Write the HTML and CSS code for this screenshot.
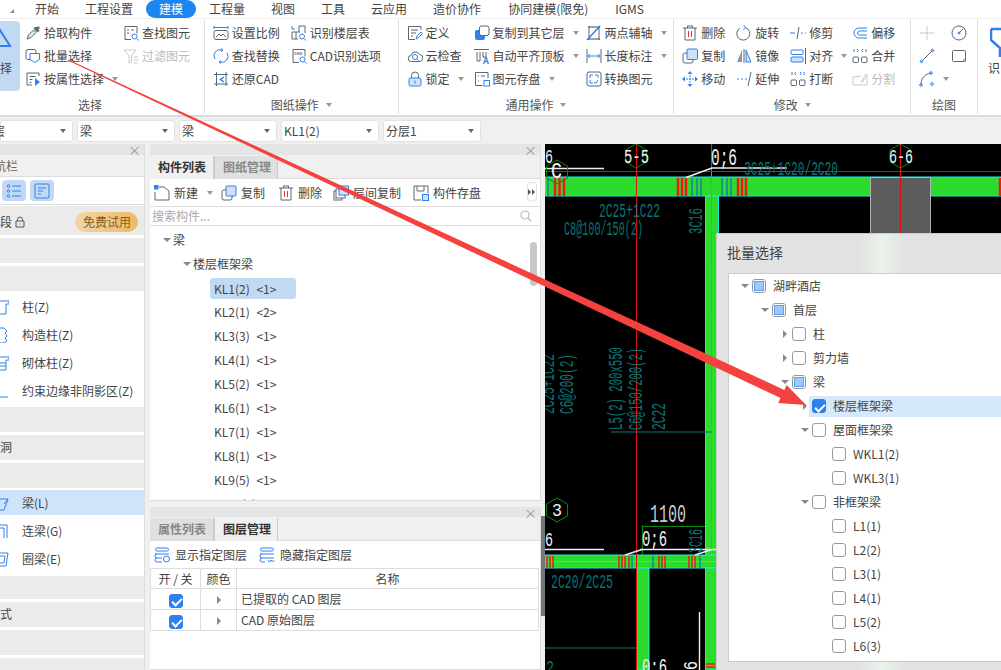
FILE: index.html
```html
<!DOCTYPE html>
<html lang="zh-CN">
<head>
  <meta charset="UTF-8" />
  <title>批量选择</title>
  <link rel="stylesheet" href="styles.css">
</head>
<body>

  <nav class="tabs">
    <span class="tabs-corner"></span>
    <a>开始</a><a>工程设置</a><a class="active">建模</a><a>工程量</a><a>视图</a><a>工具</a><a>云应用</a><a>造价协作</a><a class="wide">协同建模(限免)</a><a>IGMS</a>
  </nav>

  <div class="ribbon">
    <section class="group g-select">
      <div class="group-body">
        <div class="big-btn">
          <svg class="big-ic" viewBox="0 0 12 20"><path d="M0 2 L10 18 H-6 Z" fill="none" stroke="#2f80ed" stroke-width="2"/></svg>
          <span>择</span>
        </div>
        <div class="col w98">
          <div class="tool"><svg class="ic" viewBox="0 0 16 16"><path d="M2 14l1.500-4 5-5 2.500 2.500-5 5z" fill="#dfe6ee"/><path d="M9 3.500l1.500-1.500 1 1L13 1.500 14.500 3 13 4.500l1 1-1.500 1.500z" fill="#5b6670"/></svg>拾取构件</div>
          <div class="tool"><svg class="ic" viewBox="0 0 16 16"><rect x="1" y="1.500" width="10" height="10" rx="2"/><path class="b" d="M5 5.500h9.500v6l-4.700 3-4.800-3z" fill="#fff"/></svg>批量选择</div>
          <div class="tool"><svg class="ic" viewBox="0 0 16 16"><path d="M14 5V2H2v12h5M4.500 5.500h6M4.500 8.500h3M4.500 11.500h2"/><path d="M10 7l5 4-5 4z" fill="#2f80ed" stroke="none"/></svg>按属性选择<i class="caret"></i></div>
        </div>
        <div class="col">
          <div class="tool"><svg class="ic" viewBox="0 0 16 16"><path d="M8 14.500H2v-13h12v7M4 5h2M8 5h3M4 8h2"/><circle class="b" cx="11.500" cy="11.500" r="2.500"/><path class="b" d="M13.500 13.500l2 2"/></svg>查找图元</div>
          <div class="tool off"><svg class="ic" viewBox="0 0 16 16"><path class="g" d="M1 2h12L8.500 8v6L6 15V8zM10.500 9H15M10.500 12H15M10.500 15H15"/></svg>过滤图元</div>
        </div>
      </div>
      <div class="group-label">选择</div>
    </section>

    <section class="group g-cad">
      <div class="group-body">
        <div class="col w78">
          <div class="tool"><svg class="ic" viewBox="0 0 16 16"><path class="b" d="M1 1v3M15 1v3M1 2.500h14"/><rect x="1" y="5.500" width="14" height="9" rx="2"/><path d="M3 12l3-3 2 2 2-2 3 3"/></svg>设置比例</div>
          <div class="tool"><svg class="ic" viewBox="0 0 16 16"><path class="b" d="M2 11A6 6 0 0 1 9 2M14 5a6 6 0 0 1-7 9"/><path class="b" d="M8 .5L10 2 8 4M8 12.500L6 14l2 1.500"/></svg>查找替换</div>
          <div class="tool"><svg class="ic" viewBox="0 0 16 16"><path d="M1 3.500h14M3.500 1v14M1 13h14M13 1v14"/><path class="b" d="M11 6L7.500 8.500 11 11" stroke-width="1.500"/></svg>还原CAD</div>
        </div>
        <div class="col">
          <div class="tool"><svg class="ic" viewBox="0 0 16 16"><path class="b" d="M1 1v3h3"/><path d="M8 1h6v7M1 7h8M1 7v7h6M5 7v7M8 1v6"/><circle class="b" cx="11" cy="11.500" r="2.500"/><path class="b" d="M13 13.500l2 2"/></svg>识别楼层表</div>
          <div class="tool"><svg class="ic" viewBox="0 0 16 16"><path d="M8 14.500H2v-13h12v7"/><text class="ic-txt" x="3" y="7">CAD</text><circle class="b" cx="11.500" cy="11.500" r="2.500"/><path class="b" d="M13.500 13.500l2 2"/></svg>CAD识别选项</div>
        </div>
      </div>
      <div class="group-label">图纸操作<i class="caret"></i></div>
    </section>

    <section class="group g-common">
      <div class="group-body">
        <div class="col w67">
          <div class="tool"><svg class="ic" viewBox="0 0 16 16"><path d="M14 5V1.500H1.500v13H8M4 5h7M4 8h5M4 11h2"/><path class="b" d="M9 14l1-3 4-4 1.500 1.500-4 4z"/></svg>定义</div>
          <div class="tool"><svg class="ic" viewBox="0 0 16 16"><path d="M4.500 13.500A3 3 0 0 1 4 7.500 4.500 4.500 0 0 1 12.500 6.500 3.500 3.500 0 0 1 12 13.500z"/><circle class="b" cx="8" cy="9" r="2.500"/><path class="b" d="M10 11l1.500 1.500"/></svg>云检查</div>
          <div class="tool"><svg class="ic" viewBox="0 0 16 16"><path d="M4.500 7V4.500a3.500 3.500 0 0 1 7 0V7"/><rect class="b" x="2" y="7" width="12" height="8" rx="1.500" fill="#cfe2fa"/><path class="b" d="M8 9.500v3"/></svg>锁定<i class="caret"></i></div>
        </div>
        <div class="col w112">
          <div class="tool"><svg class="ic" viewBox="0 0 16 16"><rect x="1" y="5" width="10" height="10" rx="2" fill="#2f80ed" stroke="none"/><rect x="5.500" y="1" width="9.500" height="9.500" rx="2" fill="#fff"/></svg>复制到其它层<i class="caret"></i></div>
          <div class="tool"><svg class="ic" viewBox="0 0 16 16"><path d="M0 1.500h15M3 4v9h3V4M9 4v5h3V4"/><text class="ic-a" x="9" y="16">A</text></svg>自动平齐顶板<i class="caret"></i></div>
          <div class="tool"><svg class="ic" viewBox="0 0 16 16"><path d="M14 7V1.500H1.500v13h7M4 5h1M7 5h4M4 10h1"/><rect class="b" x="10" y="9.500" width="5.500" height="5.500"/></svg>图元存盘<i class="caret"></i></div>
        </div>
        <div class="col">
          <div class="tool"><svg class="ic" viewBox="0 0 16 16"><path d="M2 2h12M2 14h12" stroke="#9aa3ac" stroke-width="2"/><path d="M3 1v14M13 1v14"/><path class="b" d="M1 15L14 1" stroke-width="1.500"/></svg>两点辅轴<i class="caret"></i></div>
          <div class="tool"><svg class="ic" viewBox="0 0 16 16"><path d="M1 1v14M15 1v14"/><path class="b" d="M2 8h12M4 6L2 8l2 2M12 6l2 2-2 2"/></svg>长度标注<i class="caret"></i></div>
          <div class="tool"><svg class="ic" viewBox="0 0 16 16"><rect x="1" y="1" width="14" height="14" rx="2"/><path class="b" d="M4 7V4h3M12 7V4H9M4 9v3h3M12 9l-2 3H8"/></svg>转换图元</div>
        </div>
      </div>
      <div class="group-label">通用操作<i class="caret"></i></div>
    </section>

    <section class="group g-edit">
      <div class="group-body">
        <div class="col w54">
          <div class="tool"><svg class="ic" viewBox="0 0 16 16"><path d="M1 3h14M5.500 3V1h5v2M3 3v12h10V3"/><path d="M6.500 6v6M9.500 6v6" stroke="#e33"/></svg>删除</div>
          <div class="tool"><svg class="ic" viewBox="0 0 16 16"><rect x="1" y="5" width="10" height="10" rx="2"/><rect class="b" x="5" y="1" width="10.500" height="10.500" rx="1" fill="#cfe2fa"/></svg>复制</div>
          <div class="tool"><svg class="ic" viewBox="0 0 16 16"><path class="b" d="M8 4v8M4 8h8" stroke-dasharray="2 1"/><path d="M8 0l2.500 3h-5zM8 16l2.500-3h-5zM0 8l3-2.500v5zM16 8l-3-2.500v5z" fill="#2f80ed" stroke="none"/></svg>移动</div>
        </div>
        <div class="col w54">
          <div class="tool"><svg class="ic" viewBox="0 0 16 16"><path d="M9.500 2.500A6.500 6.500 0 1 1 4 3"/><path class="b" d="M7.500 .5l2.500 2-2.500 2"/></svg>旋转</div>
          <div class="tool"><svg class="ic" viewBox="0 0 16 16"><path d="M6 2L1 14h5z" fill="#8f98a2" stroke="none"/><path class="b" d="M10 2l5 12h-5z" fill="#cfe2fa"/><path d="M8 1v14"/></svg>镜像</div>
          <div class="tool"><svg class="ic" viewBox="0 0 16 16"><path class="b" d="M1 8h2M5 8h2M9 8h2"/><path d="M15 1l-3 14"/></svg>延伸</div>
        </div>
        <div class="col w62">
          <div class="tool"><svg class="ic" viewBox="0 0 16 16"><path class="b" d="M0 8h5M11 8h2M15 8h1"/><path d="M9 2L7 14"/></svg>修剪</div>
          <div class="tool"><svg class="ic" viewBox="0 0 16 16"><rect class="b" x="1" y="2" width="12" height="4.500" rx="1"/><rect class="b" x="1" y="9" width="12" height="5" rx="1" fill="#cfe2fa"/><path d="M15.500 0v16"/></svg>对齐<i class="caret"></i></div>
          <div class="tool"><svg class="ic" viewBox="0 0 16 16"><path class="b" d="M2 1v3M6 1L4.500 2.500 6 4M14 1v3M10 1l1.500 1.500L10 4"/><rect x="1" y="9" width="5.500" height="5.500" rx="1"/><rect x="9.500" y="9" width="5.500" height="5.500" rx="1"/></svg>打断</div>
        </div>
        <div class="col">
          <div class="tool"><svg class="ic" viewBox="0 0 16 16"><path class="b" d="M15 3H7a5 5 0 0 0 0 10h8M15 6H7.500a2 2 0 0 0 0 4H15"/></svg>偏移</div>
          <div class="tool"><svg class="ic" viewBox="0 0 16 16"><path class="b" d="M2 1v3M14 1v3M5 1L6.500 2.500 5 4M11 1L9.500 2.500 11 4"/><rect x="1" y="9" width="5.500" height="5.500" rx="1"/><rect x="9.500" y="9" width="5.500" height="5.500" rx="1"/></svg>合并</div>
          <div class="tool off"><svg class="ic" viewBox="0 0 16 16"><path class="g" d="M15 6v8H1V6l8-1M9 11l5-8 1.500 1-5 7z"/></svg>分割</div>
        </div>
      </div>
      <div class="group-label">修改<i class="caret"></i></div>
    </section>

    <section class="group g-draw">
      <div class="group-body">
        <div class="col w32">
          <div class="tool"><svg class="ic" viewBox="0 0 16 16"><path class="g" d="M8 1v5M8 10v5M1 8h5M10 8h5"/><circle cx="8" cy="8" r="1.500" fill="#ccc" stroke="none"/></svg></div>
          <div class="tool"><svg class="ic" viewBox="0 0 16 16"><path d="M2.500 13.500l11-11"/><circle class="b" cx="2.500" cy="13.500" r="1.300"/><circle class="b" cx="13.500" cy="2.500" r="1.300"/></svg></div>
          <div class="tool"><svg class="ic" viewBox="0 0 16 16"><path d="M2 14C2 7 6 3 12 2"/><circle class="b" cx="2" cy="14" r="1.300"/><circle class="b" cx="12" cy="2" r="1.300"/><circle class="b" cx="13" cy="13" r="1.300"/></svg><i class="caret"></i></div>
        </div>
        <div class="col">
          <div class="tool"><svg class="ic" viewBox="0 0 16 16"><circle cx="8" cy="8" r="7"/><path class="b" d="M8 8l4-4"/><circle class="b" cx="8" cy="8" r="1"/></svg></div>
          <div class="tool"><svg class="ic" viewBox="0 0 16 16"><rect x="1.500" y="2.500" width="13" height="11" rx="1"/><circle class="b" cx="13.500" cy="12.500" r="1"/></svg></div>
        </div>
      </div>
      <div class="group-label">绘图</div>
    </section>

    <section class="g-recog">
      <svg class="recog-ic" viewBox="0 0 11 30"><path d="M1 2h10M1 2v11l9 8v9" fill="none" stroke="#2f80ed" stroke-width="2.500"/></svg>
      <span>识</span>
    </section>
  </div>

  <div class="combos">
    <div class="combo first"><span>层</span><i class="caret"></i></div>
    <div class="combo"><span>梁</span><i class="caret"></i></div>
    <div class="combo"><span>梁</span><i class="caret"></i></div>
    <div class="combo"><span>KL1(2)</span><i class="caret"></i></div>
    <div class="combo"><span>分层1</span><i class="caret"></i></div>
  </div>

  <div class="main">
    <aside class="nav-panel">
      <div class="strip"><span class="close">×</span></div>
      <div class="nav-title">航栏</div>
      <div class="nav-btns">
        <span class="nav-btn"><svg class="ic" viewBox="0 0 16 16"><path class="b" d="M6 3h9M6 8h9M6 13h9"/><circle class="b" cx="2.500" cy="3" r="1.200"/><circle class="b" cx="2.500" cy="8" r="1.200"/><circle class="b" cx="2.500" cy="13" r="1.200"/></svg></span>
        <span class="nav-btn"><svg class="ic" viewBox="0 0 16 16"><rect class="b" x="1" y="1" width="14" height="14" rx="1"/><path class="b" d="M4 5h8M4 8h5M4 11h3"/></svg></span>
      </div>
      <div class="band trial">
        <span class="band-txt">段 <svg class="lock" viewBox="0 0 10 12"><path d="M2.500 5V3.500a2.500 2.500 0 0 1 5 0V5M1 5h8v6H1zM5 7.500v1" fill="none" stroke="#555"/></svg></span>
        <span class="trial-btn">免费试用</span>
      </div>
      <div class="band"></div>
      <div class="band"></div>
      <ul class="nav-list">
        <li><svg class="nav-ic" viewBox="0 0 9 16"><path class="b" d="M-2 2h11v3H6v10H-2"/></svg>柱(Z)</li>
        <li><svg class="nav-ic" viewBox="0 0 9 16"><path class="b" d="M-2 1h6l3 3-2 2 2 3-2 2 2 3-3 2h-6"/></svg>构造柱(Z)</li>
        <li><svg class="nav-ic" viewBox="0 0 9 16"><path class="b" d="M-2 2h11v3H6v10H-2M-2 8h8M-2 11h8"/></svg>砌体柱(Z)</li>
        <li><svg class="nav-ic" viewBox="0 0 9 16"><path d="M-2 1h7l3 3v9"/><path class="b" d="M-2 14h10"/></svg>约束边缘非阴影区(Z)</li>
      </ul>
      <div class="band after-a"></div>
      <div class="band">洞</div>
      <div class="band"></div>
      <ul class="nav-list">
        <li class="sel"><svg class="nav-ic" viewBox="0 0 9 16"><path class="b" d="M-2 4h10L4 15H-2M8 4L4 9"/></svg>梁(L)</li>
        <li><svg class="nav-ic" viewBox="0 0 9 16"><path class="b" d="M-2 2h9v13M-2 5h6v10"/></svg>连梁(G)</li>
        <li><svg class="nav-ic" viewBox="0 0 9 16"><path class="b" d="M-2 2h10L6 15H-2M-2 5h7L4 12H-2"/></svg>圈梁(E)</li>
      </ul>
      <div class="band after-b"></div>
      <div class="band">式</div>
      <div class="band"></div>
      <div class="band"></div>
    </aside>

    <div class="mid">
      <section class="panel top-panel">
        <div class="strip"><span class="close">×</span></div>
        <div class="panel-tabs"><span class="ptab on">构件列表</span><span class="ptab">图纸管理</span></div>
        <div class="bar">
          <span class="bar-item i-new"><svg class="ic" viewBox="0 0 16 16"><path d="M5 2H10L15 6V15H1V7"/><rect class="b" x="0" y="0" width="4" height="4" fill="#2f80ed"/></svg>新建<i class="caret"></i></span>
          <span class="bar-item i-copy"><svg class="ic" viewBox="0 0 16 16"><rect x="1" y="5" width="10" height="10" rx="2"/><rect class="b" x="5" y="1" width="10" height="10" rx="1" fill="#cfe2fa"/></svg>复制</span>
          <span class="bar-item i-del"><svg class="ic" viewBox="0 0 16 16"><path d="M1 3h14M5.500 3V1h5v2M3 3v12h10V3"/><path d="M6.500 6v6M9.500 6v6" stroke="#e33"/></svg>删除</span>
          <span class="bar-item i-floor"><svg class="ic" viewBox="0 0 16 16"><rect x="1" y="6" width="8" height="9"/><rect x="3" y="4" width="9" height="9" fill="#fff"/><rect class="b" x="6" y="1" width="9.500" height="9" fill="#cfe2fa"/></svg>层间复制</span>
          <span class="bar-item"><svg class="ic" viewBox="0 0 16 16"><path d="M8 15H1V1h14v7M4 1v5h7V1"/><rect class="b" x="9.500" y="9.500" width="6" height="6" fill="#cfe2fa"/></svg>构件存盘</span>
          <span class="more"><svg viewBox="0 0 8 6"><path d="M0 0l3 3-3 3zM4 0l3 3-3 3z" fill="#555"/></svg></span>
        </div>
        <div class="search"><span>搜索构件...</span><svg class="search-ic" viewBox="0 0 12 12"><circle cx="5" cy="5" r="4" fill="none" stroke="#bbb" stroke-width="1.200"/><path d="M8 8l3 3" stroke="#bbb" stroke-width="1.200"/></svg></div>
        <div class="list">
          <div class="list-head lv1"><i class="tri-d"></i>梁</div>
          <div class="list-head lv2"><i class="tri-d"></i>楼层框架梁</div>
          <div class="kl sel">KL1(2) <small>&lt;1&gt;</small></div>
          <div class="kl">KL2(1) <small>&lt;2&gt;</small></div>
          <div class="kl">KL3(3) <small>&lt;1&gt;</small></div>
          <div class="kl">KL4(1) <small>&lt;1&gt;</small></div>
          <div class="kl">KL5(2) <small>&lt;1&gt;</small></div>
          <div class="kl">KL6(1) <small>&lt;1&gt;</small></div>
          <div class="kl">KL7(1) <small>&lt;1&gt;</small></div>
          <div class="kl">KL8(1) <small>&lt;1&gt;</small></div>
          <div class="kl">KL9(5) <small>&lt;1&gt;</small></div>
          <div class="kl">KL10(1) <small>&lt;1&gt;</small></div>
          <span class="scroll-thumb"></span>
        </div>
      </section>

      <section class="panel bottom-panel">
        <div class="strip short"><span class="close">×</span></div>
        <div class="panel-tabs"><span class="ptab">属性列表</span><span class="ptab on">图层管理</span></div>
        <div class="bar layer-bar">
          <span class="bar-item"><svg class="ic" viewBox="0 0 16 16"><path class="b" d="M3 1h10a1.500 1.500 0 0 1 0 3H3A1.500 1.500 0 0 1 3 1zM1 7h14M3 7a2 2 0 0 0 0 4h5M3 11a2 2 0 0 0 0 4h5"/><circle class="b" cx="12.500" cy="12" r="3"/></svg>显示指定图层</span>
          <span class="bar-item"><svg class="ic" viewBox="0 0 16 16"><path class="b" d="M3 1h10a1.500 1.500 0 0 1 0 3H3A1.500 1.500 0 0 1 3 1zM1 7h14M3 7a2 2 0 0 0 0 4h12M3 11a2 2 0 0 0 0 4h3M9 13l1.500 2 1.500-2 1.500 2 1.500-2"/></svg>隐藏指定图层</span>
        </div>
        <table class="layers">
          <tr class="head"><th class="c1">开 / 关</th><th class="c2">颜色</th><th>名称</th></tr>
          <tr><td class="c1"><span class="cb on"></span></td><td class="c2"><i class="tri-r"></i></td><td>已提取的 CAD 图层</td></tr>
          <tr><td class="c1"><span class="cb on"></span></td><td class="c2"><i class="tri-r"></i></td><td>CAD 原始图层</td></tr>
        </table>
      </section>
    </div>

    <span class="splitter"></span>

    <div class="canvas">
      <svg class="cad" viewBox="545 144 456 526">
        <rect x="545" y="144" width="456" height="526" fill="#000"/>

        <!-- beams -->
        <rect x="545" y="177" width="456" height="19" fill="#2cdc2c" stroke="#18eaea"/>
        <rect x="705.500" y="196" width="13" height="360" fill="#2cdc2c" stroke="#18eaea"/>
        <rect x="545" y="555" width="172" height="13" fill="#2cdc2c" stroke="#18eaea"/>
        <rect x="636.500" y="568" width="12.500" height="102" fill="#2cdc2c" stroke="#18eaea"/>
        <rect x="705.500" y="568" width="13" height="102" fill="#2cdc2c" stroke="#18eaea"/>
        <path d="M545 561.500H717" stroke="#8fbf8f"/>
        <path d="M711.500 144V550" stroke="#888" stroke-dasharray="40 3"/>
        <rect x="870.500" y="177.500" width="60" height="60" fill="#5c5c5c" stroke="#b5b5b5"/>

        <!-- rebar ticks -->
        <path d="M555 178v18M559.500 178v18M564 178v18M678 178v18M682 178v18M686 178v18M738 178v18M742 178v18M746 178v18M1000 178v18" stroke="#f01818" stroke-width="2.500"/>
        <path d="M548 178v18M692 178v18M697 178v18M701 178v18M722 178v18M727 178v18M731 178v18" stroke="#1450e0"/>
        <path d="M547 556v12M550 556v12M553 556v12M619 556v12M622 556v12M625 556v12M629 556v12M659 556v12M662 556v12M665 556v12M689 556v12M692 556v12M695 556v12" stroke="#f01818" stroke-width="1.500"/>
        <path d="M632 556v12M653 556v12M700 556v12" stroke="#1450e0"/>
        <path d="M706 664h9M706 667h9" stroke="#f01818" stroke-width="1.500"/>

        <!-- axis lines -->
        <path d="M545 171.500H1001" stroke="#e01010"/>
        <path d="M636.500 144V670M900.500 144V233" stroke="#e01010"/>
        <path d="M642.500 525V555M642.500 526.500H705M711.500 144V170" stroke="#0d8a0d" stroke-width="1.200"/>
        <path d="M545 168.500H604M711 168H787M686 177.500L712 168M545 549.500H604M640 549.500H716M625 555L642 549.500M695 555L712 549.500M699.500 612V670" stroke="#eee" stroke-width="1.400"/>
        <path d="M611 432H712M545 648H636" stroke="#0a7a7a"/>

        <!-- section marks -->
        <polygon points="636,144 646.400,150 646.400,162 636,168 625.600,162 625.600,150" fill="none" stroke="#0a8a0a"/>
        <polygon points="900.500,144 910.900,150 910.900,162 900.500,168 890.100,162 890.100,150" fill="none" stroke="#0a8a0a"/>
        <polygon points="557,160 567.400,166 567.400,178 557,184 546.600,178 546.600,166" fill="none" stroke="#0a8a0a"/>
        <polygon points="557,498 567.400,504 567.400,516 557,522 546.600,516 546.600,504" fill="none" stroke="#0a8a0a"/>

        <text class="w" x="545" y="163" font-size="21" textLength="8" lengthAdjust="spacingAndGlyphs">6</text>
        <text class="w" x="624" y="163" font-size="21" textLength="25" lengthAdjust="spacingAndGlyphs">5-5</text>
        <text class="w" x="889" y="163" font-size="21" textLength="24" lengthAdjust="spacingAndGlyphs">6-6</text>
        <text class="w" x="711" y="165" font-size="23" textLength="26" lengthAdjust="spacingAndGlyphs">0;6</text>
        <text class="w" x="551" y="178" font-size="22" textLength="11" lengthAdjust="spacingAndGlyphs">C</text>
        <text class="w" x="552" y="516" font-size="19" textLength="10" lengthAdjust="spacingAndGlyphs">3</text>
        <text class="w dim" x="650" y="522" font-size="26" textLength="36" lengthAdjust="spacingAndGlyphs">1100</text>
        <text class="w" x="545" y="546" font-size="21" textLength="8" lengthAdjust="spacingAndGlyphs">6</text>
        <text class="w" x="642" y="546" font-size="22" textLength="25" lengthAdjust="spacingAndGlyphs">0;6</text>
        <text class="w" x="642" y="674" font-size="22" textLength="25" lengthAdjust="spacingAndGlyphs">0:6</text>
        <text class="w" transform="translate(697,670) rotate(-90)" font-size="21" textLength="9" lengthAdjust="spacingAndGlyphs">6</text>

        <text class="t" x="744" y="175" textLength="94" lengthAdjust="spacingAndGlyphs">3C25+1C20/2C20</text>
        <text class="t" x="599" y="217" textLength="61" lengthAdjust="spacingAndGlyphs">2C25+1C22</text>
        <text class="t" x="564" y="235" textLength="79" lengthAdjust="spacingAndGlyphs">C8@100/150(2)</text>
        <text class="t" transform="translate(702,234) rotate(-90)" textLength="26" lengthAdjust="spacingAndGlyphs">3C16</text>
        <text class="t" transform="translate(554,414) rotate(-90)" textLength="60" lengthAdjust="spacingAndGlyphs">2C25+1C22</text>
        <text class="t" transform="translate(573,414) rotate(-90)" textLength="60" lengthAdjust="spacingAndGlyphs">C6@200(2)</text>
        <text class="t" transform="translate(622,430) rotate(-90)" textLength="83" lengthAdjust="spacingAndGlyphs">L5(2) 200x550</text>
        <text class="t" transform="translate(642,430) rotate(-90)" textLength="82" lengthAdjust="spacingAndGlyphs">C6@150/200(2)</text>
        <text class="t" transform="translate(665,430) rotate(-90)" textLength="27" lengthAdjust="spacingAndGlyphs">2C22</text>
        <text class="t" transform="translate(702,553) rotate(-90)" textLength="24" lengthAdjust="spacingAndGlyphs">3C16</text>
        <text class="t" x="551" y="588" textLength="62" lengthAdjust="spacingAndGlyphs">2C20/2C25</text>
        <text class="t" x="546" y="674" textLength="8" lengthAdjust="spacingAndGlyphs">2</text>
      </svg>
    </div>
  </div>

  <div class="dialog">
    <div class="dialog-title">批量选择</div>
    <div class="dialog-tree">
      <div class="row lv0"><i class="tri-d"></i><span class="cb part"></span>湖畔酒店</div>
      <div class="row lv1"><i class="tri-d"></i><span class="cb part"></span>首层</div>
      <div class="row lv2"><i class="tri-r"></i><span class="cb"></span>柱</div>
      <div class="row lv2"><i class="tri-r"></i><span class="cb"></span>剪力墙</div>
      <div class="row lv2"><i class="tri-d"></i><span class="cb part"></span>梁</div>
      <div class="row lv3 sel"><i class="tri-r"></i><span class="cb on"></span>楼层框架梁</div>
      <div class="row lv3"><i class="tri-d"></i><span class="cb"></span>屋面框架梁</div>
      <div class="row lv4"><i></i><span class="cb"></span>WKL1(2)</div>
      <div class="row lv4"><i></i><span class="cb"></span>WKL3(1)</div>
      <div class="row lv3"><i class="tri-d"></i><span class="cb"></span>非框架梁</div>
      <div class="row lv4"><i></i><span class="cb"></span>L1(1)</div>
      <div class="row lv4"><i></i><span class="cb"></span>L2(2)</div>
      <div class="row lv4"><i></i><span class="cb"></span>L3(1)</div>
      <div class="row lv4"><i></i><span class="cb"></span>L4(1)</div>
      <div class="row lv4"><i></i><span class="cb"></span>L5(2)</div>
      <div class="row lv4"><i></i><span class="cb"></span>L6(3)</div>
    </div>
  </div>

  <svg class="arrow" viewBox="0 0 1001 670">
    <polygon points="68.200,59.550 784.300,389.900 786.600,384.900 806,405 778.200,403.100 780.500,398.100 67.800,60.450" fill="#f4423f"/>
  </svg>

</body>
</html>
```

FILE: styles.css
```css
* {
  box-sizing: border-box;
}

html, body {
  margin: 0;
  padding: 0;
}

body {
  position: relative;
  width: 1001px;
  height: 670px;
  overflow: hidden;
  background-color: #f0f0f0;
  color: #444;
  font-family: "Noto Sans CJK SC", "Noto Sans", sans-serif;
  font-size: 12px;
  line-height: 18px;
}

/* top tabs */
.tabs {
  display: flex;
  align-items: center;
  height: 19px;
  padding-left: 22px;
  background: white;
  border-bottom: 1px solid #eee;
}

.tabs a {
  padding: 0 13px;
  height: 18px;
  border-radius: 9px;
}

.tabs a.wide {
  padding: 0 14px;
}

.tabs a.active {
  background: #1a86f0;
  color: white;
}

.tabs-corner {
  position: absolute;
  left: 10px;
  top: 9px;
  border-left: 4px solid transparent;
  border-bottom: 4px solid #888;
}

/* ribbon */
.ribbon {
  display: flex;
  height: 98px;
  background: white;
  border-bottom: 2px solid #ddd;
}

.group {
  display: flex;
  flex-direction: column;
  height: 94px;
  margin-top: 1px;
  border-right: 1px solid #ddd;
}

.group-body {
  display: flex;
  flex: 1;
  padding: 1px 0 0 8px;
}

.group-label {
  display: flex;
  justify-content: center;
  align-items: center;
  height: 20px;
  padding-top: 1px;
  color: #555;
}

.group-label .caret {
  margin-left: 7px;
}

.g-select { width: 205px; }
.g-cad { width: 194px; }
.g-common { width: 276px; }
.g-edit { width: 237px; }
.g-draw { width: 67px; }

.g-select .group-body { padding-left: 0; }
.g-select .group-label { padding-right: 24px; }

.big-btn {
  display: flex;
  flex-direction: column;
  width: 20px;
  height: 70px;
  margin-right: 5px;
  padding-top: 7px;
  background: #c2d9f3;
  border-radius: 0 4px 4px 0;
}

.big-ic {
  width: 12px;
  height: 20px;
}

.big-btn span {
  margin-top: 11px;
  line-height: 18px;
}

.col { display: flex; flex-direction: column; }
.w32 { width: 32px; }
.w54 { width: 54px; }
.w62 { width: 62px; }
.w67 { width: 67px; }
.w78 { width: 78px; }
.w98 { width: 98px; }
.w112 { width: 112px; }

.tool {
  display: flex;
  align-items: center;
  gap: 3px;
  height: 23px;
  white-space: nowrap;
}

.tool.off { color: #bbb; }

.ic {
  flex: none;
  width: 16px;
  height: 16px;
  fill: none;
  stroke: #5b6670;
  stroke-width: 1;
}

.ic .b, .nav-ic .b { stroke: #2f80ed; }
.ic .g { stroke: #c8c8c8; }

.ic-txt {
  font-size: 4px;
  font-weight: bold;
  fill: #5b6670;
  stroke: none;
}

.ic-a {
  font-size: 9px;
  font-weight: bold;
  fill: #2f80ed;
  stroke: none;
}

.caret {
  display: inline-block;
  margin-left: 5px;
  border-top: 4px solid #999;
  border-left: 3.5px solid transparent;
  border-right: 3.5px solid transparent;
}

.g-recog {
  display: flex;
  flex-direction: column;
  padding: 8px 0 0 12px;
}

.recog-ic {
  width: 11px;
  height: 30px;
}

.g-recog span {
  margin-top: 2px;
  margin-left: -2px;
}

/* combo row */
.combos {
  display: flex;
  gap: 4px;
  height: 26px;
  padding-top: 3px;
}

.combo {
  display: flex;
  justify-content: space-between;
  align-items: center;
  width: 98px;
  height: 22px;
  padding: 0 6px 1px 2px;
  background: white;
  border: 1px solid #e2e2e2;
  border-radius: 3px;
}

.combo .caret {
  border-top-color: #666;
}

.combo.first {
  width: 73px;
  padding-left: 0;
}

.combo.first span {
  margin-left: -8px;
}

/* main area */
.main {
  display: flex;
  height: 527px;
  padding-top: 1px;
}

.strip {
  display: flex;
  justify-content: flex-end;
  align-items: center;
  height: 11px;
  padding-right: 3px;
  background: #e5e5e5;
}

.strip.short {
  height: 10px;
}

.close {
  color: #999;
  font-size: 13px;
  line-height: 11px;
}

/* left nav */
.nav-panel {
  flex: none;
  width: 145px;
  background: white;
  border-right: 1px solid #ddd;
  overflow: hidden;
}

.nav-title {
  height: 22px;
  margin-left: -2px;
  padding-top: 2px;
  background: #f0f0f0;
  border-bottom: 1px solid #ddd;
  color: #666;
  text-indent: -4px;
}

.nav-btns {
  display: flex;
  gap: 4px;
  height: 28px;
  padding: 3px 0 0 2px;
  border-bottom: 1px solid #ddd;
}

.nav-btn {
  display: flex;
  justify-content: center;
  align-items: center;
  width: 24px;
  height: 21px;
  background: #c2d9f3;
  border-radius: 4px;
}

.band {
  height: 25px;
  margin-bottom: 3px;
  padding-top: 3px;
  background: #ebebeb;
  overflow: hidden;
}

.trial {
  display: flex;
  justify-content: space-between;
  align-items: center;
  height: 29px;
  margin-top: 1px;
  padding: 3px 6px 0 0;
}

.band-txt {
  display: flex;
  align-items: center;
  gap: 3px;
}

.lock {
  width: 10px;
  height: 12px;
}

.trial-btn {
  padding: 1px 7px 0 8px;
  height: 20px;
  border-radius: 10px;
  background: linear-gradient(to right, #f2d6a8, #ecbb62);
  color: #8a5a1a;
}

.nav-list {
  margin: -1px 0 0;
  padding: 0;
  list-style: none;
}

.nav-list li {
  display: flex;
  align-items: center;
  gap: 13px;
  height: 28px;
  white-space: nowrap;
}

.nav-list li.sel {
  height: 25px;
  margin-bottom: 2px;
  background: #cfe4fb;
}

.nav-ic {
  flex: none;
  width: 9px;
  height: 16px;
  fill: none;
  overflow: hidden;
}

.after-a {
  margin-top: 2px;
}

.after-b {
  height: 23px;
  margin-top: 3px;
}

/* middle panels */
.mid {
  flex: none;
  display: flex;
  flex-direction: column;
  gap: 6px;
  width: 391px;
  margin-left: 5px;
}

.panel {
  position: relative;
  background: white;
  border-right: 1px solid #ddd;
  border-bottom: 1px solid #ddd;
  overflow: hidden;
}

.top-panel { height: 357px; }
.bottom-panel { flex: 1; }

.panel-tabs {
  display: flex;
  height: 24px;
  padding-top: 1px;
  background: #f0f0f0;
  border-bottom: 1px solid #ddd;
}

.ptab {
  width: 64px;
  height: 23px;
  padding: 2px 0 0 8px;
  background: #e0e0e0;
  border-right: 1px solid #ccc;
  border-left: 1px solid #ccc;
  color: #888;
  font-weight: bold;
  white-space: nowrap;
}

.ptab.on {
  background: #f0f0f0;
  color: #333;
}

.panel-tabs .ptab:first-child {
  width: 64px;
  border-left: none;
}

.bar {
  position: relative;
  display: flex;
  align-items: center;
  height: 28px;
  padding-left: 4px;
  border-bottom: 1px solid #ddd;
}

.bar-item {
  display: flex;
  align-items: center;
  gap: 4px;
  margin-right: 13px;
  white-space: nowrap;
}

.i-new { width: 54px; }
.i-copy { margin-right: 13px; }
.i-del { margin-right: 11px; }
.i-floor { margin-right: 12px; }

.more {
  position: absolute;
  right: 3px;
  top: 3px;
  display: flex;
  justify-content: center;
  align-items: center;
  width: 10px;
  height: 19px;
  background: white;
  border: 1px solid #e5e5e5;
  border-radius: 3px;
}

.more svg {
  width: 8px;
  height: 6px;
}

.search {
  display: flex;
  justify-content: space-between;
  align-items: center;
  height: 19px;
  padding: 0 8px 0 2px;
  border-bottom: 1px solid #ddd;
  color: #aaa;
}

.search-ic {
  width: 12px;
  height: 12px;
}

.list {
  padding-top: 2px;
}

.list-head, .kl {
  display: flex;
  align-items: center;
  height: 24px;
  white-space: pre;
}

.list-head.lv1 { padding-left: 13px; gap: 2px; }
.list-head.lv2 { padding-left: 33px; gap: 2px; }

.kl {
  width: 86px;
  margin-left: 60px;
  padding-left: 4px;
  border-radius: 3px;
}

.kl small {
  font-size: 12px;
  margin-left: 4px;
}

.kl.sel {
  height: 21px;
  margin-top: 2px;
  margin-bottom: 1px;
  background: #c2d9f3;
}

.scroll-thumb {
  position: absolute;
  top: 98px;
  right: 3px;
  width: 7px;
  height: 44px;
  background: #c8c8c8;
  border-radius: 4px;
}

.tri-d {
  display: inline-block;
  flex: none;
  border-top: 4px solid #888;
  border-left: 4px solid transparent;
  border-right: 4px solid transparent;
}

.tri-r {
  display: inline-block;
  flex: none;
  border-left: 4px solid #888;
  border-top: 4px solid transparent;
  border-bottom: 4px solid transparent;
}

/* layers table */
.layer-bar {
  height: 27px;
  padding-left: 4px;
  border-bottom: none;
}

.layer-bar .bar-item {
  gap: 5px;
  margin-right: 12px;
}

.layers {
  width: 389px;
  border-collapse: collapse;
  table-layout: fixed;
}

.layers th, .layers td {
  height: 21px;
  padding: 0;
  border: 1px solid #ddd;
  font-weight: normal;
}

.layers .head th { height: 20px; }

.layers th { text-align: center; }
.layers td { padding-left: 4px; }
.layers .c1 { width: 50px; padding: 0; text-align: center; }
.layers .c2 { width: 36px; padding: 0; text-align: center; }

.cb {
  display: inline-block;
  flex: none;
  position: relative;
  width: 14px;
  height: 14px;
  vertical-align: middle;
  background: white;
  border: 1px solid #999;
  border-radius: 3px;
}

.cb.part::after {
  content: "";
  position: absolute;
  inset: 1px;
  background: #9cc9ff;
  border: 1px solid #5a9ef0;
}

.cb.on {
  background: #2f80ed;
  border-color: #2f80ed;
}

.cb.on::after {
  content: "";
  position: absolute;
  left: 4px;
  top: 1.500px;
  width: 4px;
  height: 8px;
  border: solid white;
  border-width: 0 2px 2px 0;
  transform: rotate(45deg);
}

/* drawing area */
.splitter {
  flex: none;
  align-self: flex-start;
  width: 4px;
  height: 100px;
  margin-top: 372px;
  background: #6e7880;
}

.canvas {
  flex: 1;
  overflow: hidden;
}

.cad {
  display: block;
  width: 456px;
  height: 526px;
  font-family: "Liberation Mono", monospace;
}

.cad .w { fill: #f2f2f2; }
.cad .w.dim { fill: #ccc; }
.cad .t { fill: #0a7474; font-size: 20px; }

/* batch select dialog */
.dialog {
  position: absolute;
  left: 716px;
  top: 233px;
  width: 285px;
  height: 437px;
  padding-left: 11px;
  background: linear-gradient(to right, #e2e2e2 50%, #e9f3ea 58%, #e2e2e2 66%);
  border-left: 1px solid #ccc;
  border-top: 1px solid #ccc;
}

.dialog-title {
  height: 39px;
  padding-top: 8px;
  margin-left: -1px;
  font-size: 14px;
  line-height: 20px;
  color: #444;
}

.dialog-tree {
  height: 389px;
  padding-left: 1px;
  background: white;
  border: 1px solid #ccc;
  border-right: none;
}

.row {
  display: flex;
  align-items: center;
  gap: 3px;
  height: 24px;
  white-space: nowrap;
}

.row i {
  width: 8px;
}

.row .tri-r {
  margin: 0 2px 0 2px;
  width: 4px;
}

.row .cb {
  margin-right: 4px;
}

.row.lv0 { padding-left: 11px; }
.row.lv1 { padding-left: 31px; }
.row.lv2 { padding-left: 51px; }
.row.lv3 { padding-left: 71px; }
.row.lv4 { padding-left: 91px; }

.row.sel {
  background: linear-gradient(#d6e8fb, #d6e8fb) 79px 2px / 100% 21px no-repeat;
}

/* annotation over everything */
.arrow {
  position: absolute;
  left: 0;
  top: 0;
  width: 1001px;
  height: 670px;
  pointer-events: none;
}
```
